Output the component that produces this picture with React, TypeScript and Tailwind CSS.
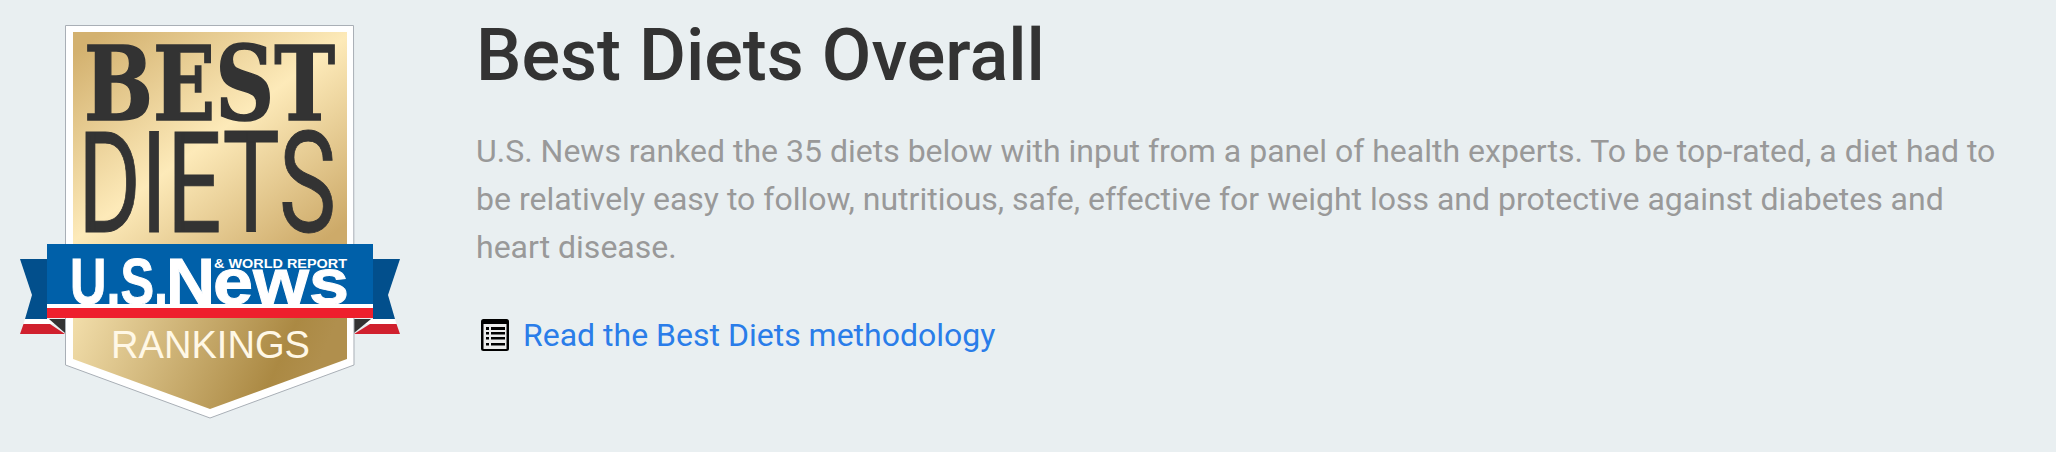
export default function App() {
  return (
    <div className="flex h-[452px] w-[2056px] overflow-hidden bg-[#e9eff1]">
      <svg width="476" height="452" viewBox="0 0 476 452" className="block shrink-0">
        <defs>
          <linearGradient id="goldTop" gradientUnits="userSpaceOnUse" x1="105" y1="30" x2="285" y2="270">
            <stop offset="0" stopColor="#d3b16f" />
            <stop offset="0.5" stopColor="#fdeab9" />
            <stop offset="1" stopColor="#cdaa69" />
          </linearGradient>
          <linearGradient id="goldBottom" gradientUnits="userSpaceOnUse" x1="75" y1="305" x2="300" y2="405">
            <stop offset="0" stopColor="#f3dfac" />
            <stop offset="0.85" stopColor="#ab8943" />
            <stop offset="1" stopColor="#b08f4d" />
          </linearGradient>
        </defs>
        {/* ribbon tails */}
        <polygon points="20,259 47,259 47,319 25,319 32,295" fill="#024f8c" />
        <polygon points="400,259 373,259 373,319 395,319 388,295" fill="#024f8c" />
        <polygon points="25,319 50,319 65,333 65,324 23.5,324" fill="#ffffff" />
        <polygon points="395,319 370,319 354,333 354,324 396.5,324" fill="#ffffff" />
        <polygon points="23.5,324 50,324 65,334 20,334" fill="#d0202e" />
        <polygon points="396.5,324 370,324 354,334 400,334" fill="#d0202e" />
        <polygon points="49,319 65,319 65,333" fill="#333333" />
        <polygon points="371,319 354,319 354,333" fill="#333333" />
        {/* shield */}
        <polygon points="65.5,25.5 353.5,25.5 354,365 210,418 65.5,365" fill="#ffffff" stroke="#a9afb6" strokeWidth="1" />
        <rect x="73" y="32" width="274" height="215" fill="url(#goldTop)" />
        <polygon points="73,315 347,315 347,359 210,409 73,359" fill="url(#goldBottom)" />
        <text x="84" y="120" textLength="251" lengthAdjust="spacingAndGlyphs" fontFamily="'DejaVu Serif Condensed', 'DejaVu Serif', serif" fontWeight="700" fontSize="103" fill="#333333" stroke="#333333" strokeWidth="1.5">BEST</text>
        <text x="78" y="232" textLength="258" lengthAdjust="spacingAndGlyphs" fontFamily="'Roboto', sans-serif" fontWeight="400" fontSize="141" fill="#333333" stroke="#333333" strokeWidth="1">DIETS</text>
        {/* band */}
        <rect x="47" y="244" width="326" height="60" fill="#0060a9" />
        <text y="304" fontFamily="'Liberation Sans', sans-serif" fontWeight="700" fontSize="64" fill="#ffffff" stroke="#ffffff" strokeWidth="1">
          <tspan x="70" textLength="98" lengthAdjust="spacingAndGlyphs">U.S.</tspan>
          <tspan x="166" textLength="49" lengthAdjust="spacingAndGlyphs">N</tspan>
          <tspan x="213" textLength="136" lengthAdjust="spacingAndGlyphs">ews</tspan>
        </text>
        <text x="214" y="268" textLength="133" lengthAdjust="spacingAndGlyphs" fontFamily="'Liberation Sans', sans-serif" fontWeight="700" fontSize="13" fill="#ffffff">&amp; WORLD REPORT</text>
        <rect x="47" y="304" width="326" height="4" fill="#ffffff" />
        <rect x="47" y="308" width="326" height="10" fill="#ee1f2d" />
        <text x="111" y="358" textLength="199" lengthAdjust="spacingAndGlyphs" fontFamily="'Liberation Sans', sans-serif" fontSize="39" fill="#fff8e6">RANKINGS</text>
      </svg>
      <div className="min-w-0 flex-1 pr-[40px] font-['Roboto',sans-serif]">
        <h1 className="m-0 mt-[14px] text-[72px] leading-[84px] font-medium text-[#333333]">Best Diets Overall</h1>
        <p className="mt-[29px] text-[32px] leading-[48px] text-[#999999]">
          U.S. News ranked the 35 diets below with input from a panel of health experts. To be top-rated, a diet had to be relatively easy to follow, nutritious, safe, effective for weight loss and protective against diabetes and heart disease.
        </p>
        <div className="mt-[44px] flex items-center gap-[14px] pl-[5px]">
          <svg width="28" height="32" viewBox="0 0 28 32" className="block shrink-0">
            <rect x="0" y="0" width="28" height="32" rx="2.5" fill="#000000" />
            <rect x="2.5" y="5" width="23" height="25" fill="#ececec" />
            <rect x="5" y="8" width="3" height="3" fill="#000000" />
            <rect x="5" y="13" width="3" height="2.5" fill="#000000" />
            <rect x="5" y="18" width="3" height="2.5" fill="#000000" />
            <rect x="5" y="24" width="3" height="2.5" fill="#000000" />
            <rect x="10" y="8" width="14" height="3" fill="#000000" />
            <rect x="10" y="13" width="14" height="2.5" fill="#000000" />
            <rect x="10" y="18" width="14" height="2.5" fill="#000000" />
            <rect x="10" y="24" width="14" height="2.5" fill="#000000" />
          </svg>
          <a href="#" className="text-[32px] leading-[40px] text-[#2a7de9]">Read the Best Diets methodology</a>
        </div>
      </div>
    </div>
  );
}
